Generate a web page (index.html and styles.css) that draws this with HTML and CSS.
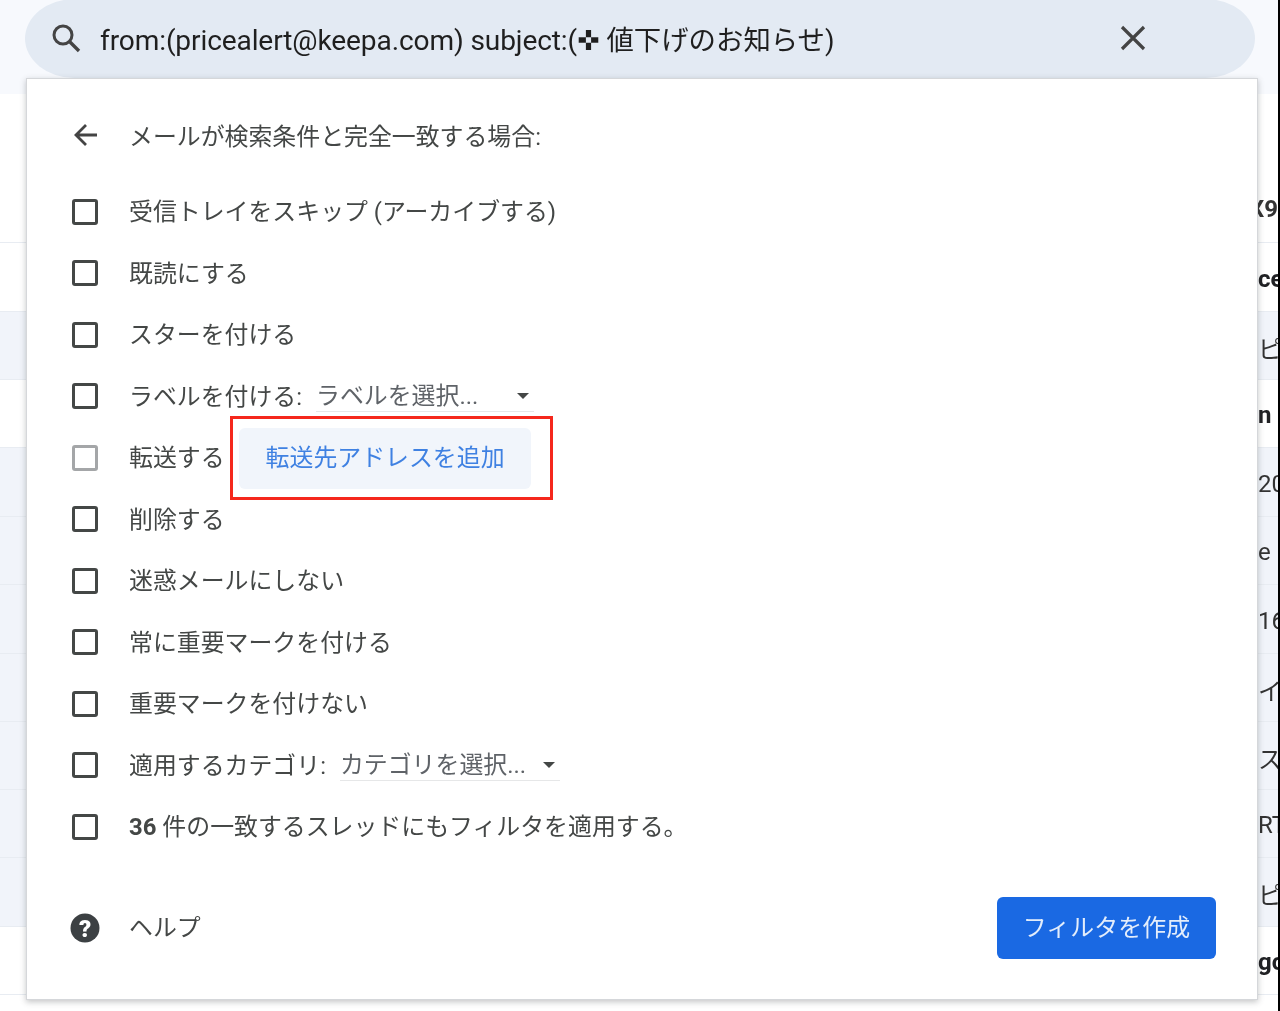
FILE: index.html
```html
<!DOCTYPE html>
<html lang="ja">
<head>
<meta charset="utf-8">
<title>フィルタ</title>
<link rel="stylesheet" href="styles.css">
</head>
<body>
<div class="page">
  <header class="top">
    <div class="search">
      <svg class="search-icon" viewBox="0 0 32 32" width="32" height="32"><circle cx="13" cy="13" r="9" fill="none" stroke="#444" stroke-width="3"/><path d="M19.5 19.5L29 29" stroke="#444" stroke-width="3.4" fill="none"/></svg>
      <span class="query">from:(pricealert@keepa.com) subject:(<span class="mark">✜</span> <span class="query-cjk">値下げのお知らせ)</span></span>
      <svg class="close-icon" viewBox="0 0 26 26" width="26" height="26"><path d="M2 2L24 24M24 2L2 24" stroke="#444" stroke-width="3.2" fill="none"/></svg>
    </div>
  </header>
  <div class="list">
    <div class="row h81"></div>
    <div class="row h68 light">X9</div>
    <div class="row h69 bold">ce</div>
    <div class="row h68 tint">ピ</div>
    <div class="row h68 bold">n</div>
    <div class="row h69 tint">20</div>
    <div class="row h68 tint">e</div>
    <div class="row h69 tint">16</div>
    <div class="row h68 tint">イ</div>
    <div class="row h68 tint">ス</div>
    <div class="row h68 tint">RT</div>
    <div class="row h69 tint">ピ</div>
    <div class="row h68 bold">go</div>
  </div>
</div>

<section class="dialog">
  <div class="heading">
    <svg class="back" viewBox="0 0 26 26" width="26" height="26"><path d="M24 13H4M13 3L3 13l10 10" stroke="#444" stroke-width="2.8" fill="none"/></svg>
    <span>メールが検索条件と完全一致する場合:</span>
  </div>
  <ul class="options">
    <li class="option"><span class="check"></span><span>受信トレイをスキップ (アーカイブする)</span></li>
    <li class="option"><span class="check"></span><span>既読にする</span></li>
    <li class="option"><span class="check"></span><span>スターを付ける</span></li>
    <li class="option"><span class="check"></span><span>ラベルを付ける:</span><span class="select select-label">ラベルを選択...<i class="caret"></i></span></li>
    <li class="option"><span class="check check-off"></span><span>転送する</span><span class="highlight"><span class="add">転送先アドレスを追加</span></span></li>
    <li class="option"><span class="check"></span><span>削除する</span></li>
    <li class="option"><span class="check"></span><span>迷惑メールにしない</span></li>
    <li class="option"><span class="check"></span><span>常に重要マークを付ける</span></li>
    <li class="option"><span class="check"></span><span>重要マークを付けない</span></li>
    <li class="option"><span class="check"></span><span>適用するカテゴリ:</span><span class="select select-cat">カテゴリを選択...<i class="caret"></i></span></li>
    <li class="option"><span class="check"></span><span><b>36</b> 件の一致するスレッドにもフィルタを適用する。</span></li>
  </ul>
  <div class="foot">
    <div class="help">
      <svg class="help-icon" viewBox="0 0 30 30" width="30" height="30"><circle cx="15" cy="15" r="14.5" fill="#3c4043"/><text x="15" y="23.5" text-anchor="middle" class="help-q">?</text></svg>
      <span class="help-text">ヘルプ</span>
    </div>
    <button class="create">フィルタを作成</button>
  </div>
</section>
</body>
</html>
```
FILE: styles.css
```css
* { box-sizing: border-box; }
html, body { margin: 0; height: 100%; }
body {
  width: 1280px;
  height: 1011px;
  overflow: hidden;
  position: relative;
  background: #f7f9fd;
  border-right: 2px solid #000;
  font-family: "Roboto", "Noto Sans CJK JP", sans-serif;
  color: #444746;
}
.page { display: flex; flex-direction: column; height: 1011px; filter: blur(0.35px); }
.top { height: 94px; padding: 0 23px 0 25px; flex: none; }
.search {
  display: flex;
  align-items: center;
  height: 79px;
  margin-top: -1px;
  padding: 0 109px 2px 25px;
  background: #e3eaf3;
  border-radius: 50px 50px 50px 50px / 40px 40px 40px 40px;
}
.search-icon { flex: none; margin-right: 18px; }
.query { flex: 1; font-size: 28.1px; color: #1f1f1f; white-space: nowrap; letter-spacing: -0.12px; }
.query-cjk { font-size: 27.4px; letter-spacing: 0; }
.mark { font-family: "DejaVu Sans", sans-serif; font-size: 27px; line-height: 1; }
.close-icon { flex: none; }

.list { flex: 1; background: #fff; overflow: hidden; }
.row {
  padding-left: 1258px;
  padding-top: 3px;
  display: flex;
  align-items: center;
  border-bottom: 1px solid #e8ecf2;
  font-size: 24px;
  color: #333;
  white-space: nowrap;
}
.h81 { height: 81px; border-bottom: none; }
.h68 { height: 68px; }
.h69 { height: 69px; }
.tint { background: #f1f4fa; }
.bold { font-weight: 700; color: #202124; }
.light { font-weight: 700; color: #333; padding-left: 1249px; padding-top: 0; }

.dialog {
  position: absolute;
  left: 26px;
  top: 78px;
  width: 1232px;
  height: 922px;
  display: flex;
  flex-direction: column;
  padding: 0 41px 0 46px;
  background: #fff;
  border: 1px solid #d5d7da;
  box-shadow: 0 2px 6px rgba(60, 64, 67, 0.3);
  font-size: 23.9px;
  color: #444746;
  filter: blur(0.35px);
}
.heading { display: flex; align-items: center; gap: 30px; height: 57px; margin-top: 27px; white-space: nowrap; }
.back { flex: none; }
.options { list-style: none; margin: 16px 0 0; padding: 0; }
.option { display: flex; align-items: center; height: 61.5px; white-space: nowrap; }
.check {
  flex: none;
  width: 26px;
  height: 26px;
  margin: 4px 31px 0 -1px;
  border: 3px solid #444746;
  border-radius: 3px;
}
.check-off { border-color: #a4a6a8; }
.select {
  position: relative;
  display: flex;
  align-items: center;
  height: 36px;
  margin-left: 14px;
  border-bottom: 1px solid #e6e7e8;
  color: #5f6368;
}
.select-label { width: 218px; }
.select-cat { width: 220px; }
.caret {
  position: absolute;
  right: 5px;
  top: 17px;
  border: 6.5px solid transparent;
  border-top-color: #444746;
  border-bottom: 0;
}
.highlight {
  display: flex;
  align-items: center;
  margin: 5px 0 0 5px;
  padding: 5px 5px 5px 6px;
  width: 323px;
  height: 84px;
  border: 3px solid #f5281c;
}
.add {
  flex: none;
  display: flex;
  align-items: center;
  justify-content: center;
  width: 292px;
  height: 61px;
  padding: 0 0 5px 1px;
  background: #f1f5fb;
  border-radius: 6px;
  color: #3f81e2;
}
.foot {
  display: flex;
  align-items: center;
  justify-content: space-between;
  margin-top: 41px;
  height: 62px;
}
.help { display: flex; align-items: center; gap: 29px; margin-left: -3px; }
.help-icon { flex: none; }
.help-text { margin-top: -4px; }
.help-q { font-family: "Roboto", sans-serif; font-size: 24px; font-weight: 900; fill: #fff; }
.create {
  width: 219px;
  height: 62px;
  padding: 0 0 4px;
  border: none;
  border-radius: 6px;
  background: #1a69e3;
  color: #e3edfb;
  font: inherit;
  letter-spacing: 0.1px;
}
```
